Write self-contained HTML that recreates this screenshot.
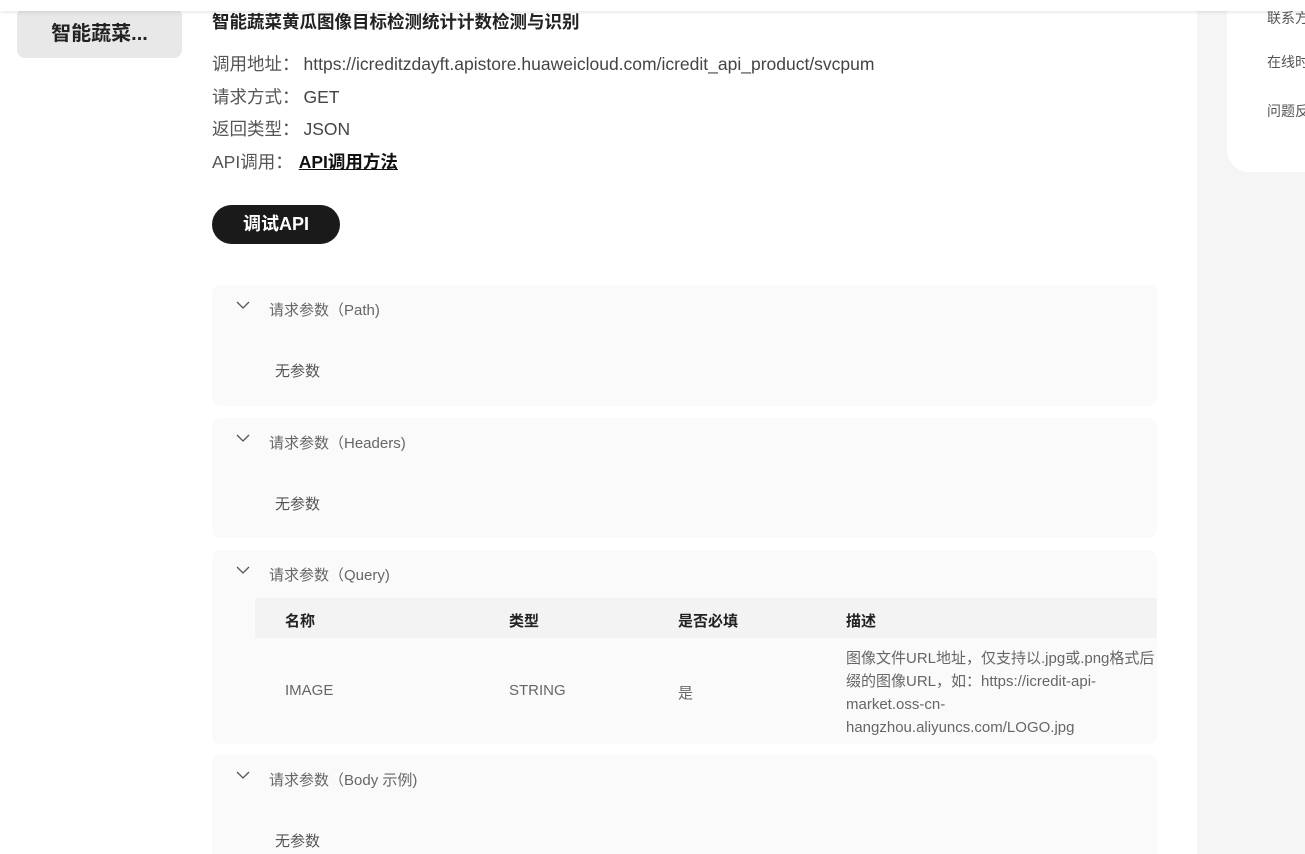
<!DOCTYPE html>
<html><head><meta charset="utf-8"><style>
*{margin:0;padding:0;box-sizing:border-box}
html,body{width:1305px;height:854px;overflow:hidden}
body{background:#fff;font-family:"Liberation Sans","Noto Sans CJK SC",sans-serif;position:relative;color:#333}
.abs{position:absolute}
.topbar{left:0;top:0;width:1305px;height:11px;background:#fff;box-shadow:0 1px 4px rgba(0,0,0,.12);z-index:5}
.side{left:1197px;top:0;width:108px;height:854px;background:#f5f5f5}
.card{left:1227px;top:0;width:90px;height:172px;background:#fff;border-radius:0 0 0 22px}
.card div{position:absolute;left:40px;font-size:14px;color:#555;white-space:nowrap}
.lbtn{left:17px;top:8px;width:165px;height:50px;background:#e8e8e8;border-radius:8px;font-size:20px;font-weight:bold;color:#222;text-align:center;line-height:52px}
.title{left:212px;top:9px;font-size:17.5px;font-weight:bold;color:#222;white-space:nowrap}
.info{left:212px;font-size:17.5px;color:#555;white-space:nowrap}
.info span{margin-left:4px;color:#444}
.btn{left:212px;top:205px;width:128px;height:39px;background:#1a1a1a;border-radius:20px;color:#fff;font-size:18px;font-weight:bold;text-align:center;line-height:39px}
.panel{left:212px;width:945px;background:#fafafa;border-radius:8px}
.ph{position:absolute;left:57px;top:14px;font-size:15px;color:#666;white-space:nowrap}
.chev{position:absolute;left:24px;top:16px}
.np{position:absolute;left:63px;font-size:15px;color:#555}
.th{left:255px;top:598px;width:902px;height:40px;background:#f3f3f3}
.t{position:absolute;font-size:15px;white-space:nowrap}
</style></head><body>
<div class="abs side"></div>
<div class="abs card"><div style="top:8px">联系方式</div><div style="top:52px">在线时间</div><div style="top:101px">问题反馈</div></div>
<div class="abs topbar"></div>
<div class="abs lbtn">智能蔬菜...</div>
<div class="abs title">智能蔬菜黄瓜图像目标检测统计计数检测与识别</div>
<div class="abs info" style="top:51px">调用地址：<span>https://icreditzdayft.apistore.huaweicloud.com/icredit_api_product/svcpum</span></div>
<div class="abs info" style="top:84px">请求方式：<span>GET</span></div>
<div class="abs info" style="top:116px">返回类型：<span>JSON</span></div>
<div class="abs info" style="top:149px">API调用：<span style="font-weight:bold;color:#111;text-decoration:underline;margin-left:6px">API调用方法</span></div>
<div class="abs btn">调试API</div>

<div class="abs panel" style="top:285px;height:121px">
<svg class="chev" width="14" height="9" viewBox="0 0 14 9"><path d="M1 1l6 6 6-6" fill="none" stroke="#555" stroke-width="1.3"/></svg>
<div class="ph">请求参数（Path)</div><div class="np" style="top:75px">无参数</div></div>
<div class="abs panel" style="top:418px;height:120px">
<svg class="chev" width="14" height="9" viewBox="0 0 14 9"><path d="M1 1l6 6 6-6" fill="none" stroke="#555" stroke-width="1.3"/></svg>
<div class="ph">请求参数（Headers)</div><div class="np" style="top:75px">无参数</div></div>
<div class="abs panel" style="top:550px;height:194px">
<svg class="chev" width="14" height="9" viewBox="0 0 14 9"><path d="M1 1l6 6 6-6" fill="none" stroke="#555" stroke-width="1.3"/></svg>
<div class="ph">请求参数（Query)</div></div>
<div class="abs panel" style="top:755px;height:99px;border-radius:8px 8px 0 0">
<svg class="chev" width="14" height="9" viewBox="0 0 14 9"><path d="M1 1l6 6 6-6" fill="none" stroke="#555" stroke-width="1.3"/></svg>
<div class="ph">请求参数（Body 示例)</div><div class="np" style="top:75px">无参数</div></div>

<div class="abs th"></div>
<div class="t" style="left:285px;top:610px;font-weight:bold;color:#222">名称</div>
<div class="t" style="left:509px;top:610px;font-weight:bold;color:#222">类型</div>
<div class="t" style="left:678px;top:610px;font-weight:bold;color:#222">是否必填</div>
<div class="t" style="left:846px;top:610px;font-weight:bold;color:#222">描述</div>
<div class="t" style="left:285px;top:682px;color:#666">IMAGE</div>
<div class="t" style="left:509px;top:682px;color:#666">STRING</div>
<div class="t" style="left:678px;top:682px;color:#666">是</div>
<div class="t" style="left:846px;top:647px;color:#666;line-height:23px;white-space:nowrap">图像文件URL地址，仅支持以.jpg或.png格式后<br>缀的图像URL，如：https://icredit-api-<br>market.oss-cn-<br>hangzhou.aliyuncs.com/LOGO.jpg</div>
</body></html>
